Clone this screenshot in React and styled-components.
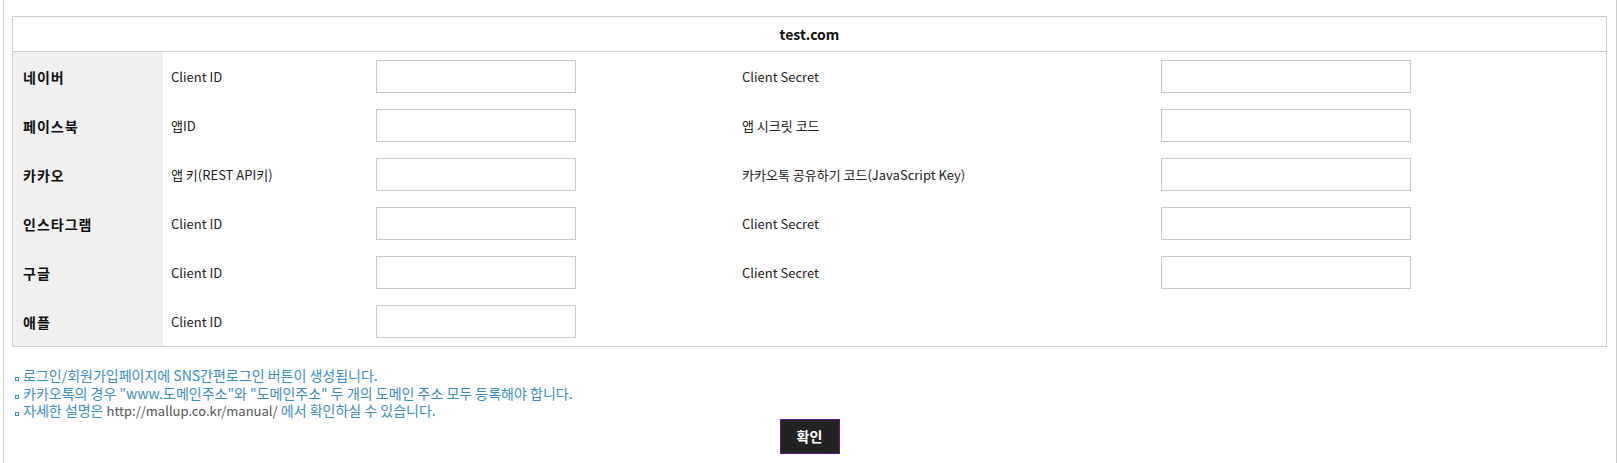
import React from 'react'
import styled, { createGlobalStyle } from 'styled-components'

const GlobalStyle = createGlobalStyle`
  html, body {
    margin: 0;
    padding: 0;
    background: #fff;
  }
  body {
    font-family: "Noto Sans CJK KR", "Noto Sans", sans-serif;
    font-size: 13px;
    color: #222;
  }
`

const providers = [
  { name: '네이버', label1: 'Client ID', label2: 'Client Secret' },
  { name: '페이스북', label1: '앱ID', label2: '앱 시크릿 코드' },
  { name: '카카오', label1: '앱 키(REST API키)', label2: '카카오톡 공유하기 코드(JavaScript Key)' },
  { name: '인스타그램', label1: 'Client ID', label2: 'Client Secret' },
  { name: '구글', label1: 'Client ID', label2: 'Client Secret' },
  { name: '애플', label1: 'Client ID' },
]

const App = () => {
  return (
    <>
      <GlobalStyle />
      <Page>
        <Table>
          <TableHead>test.com</TableHead>
          {providers.map((p) => (
            <Row key={p.name}>
              <RowHead>{p.name}</RowHead>
              <Cell>{p.label1}</Cell>
              <Cell><TextInput type="text" w={200} /></Cell>
              <Cell>{p.label2}</Cell>
              <Cell>{p.label2 && <TextInput type="text" w={250} />}</Cell>
            </Row>
          ))}
        </Table>

        <Notes>
          <Note>로그인/회원가입페이지에 SNS간편로그인 버튼이 생성됩니다.</Note>
          <Note>카카오톡의 경우 "www.도메인주소"와 "도메인주소" 두 개의 도메인 주소 모두 등록해야 합니다.</Note>
          <Note>자세한 설명은 <Url>http://mallup.co.kr/manual/</Url> 에서 확인하실 수 있습니다.</Note>
        </Notes>

        <ButtonBar>
          <SubmitButton type="button">확인</SubmitButton>
        </ButtonBar>
      </Page>
    </>
  )
}

const Page = styled.div`
  margin-left: 3px;
  min-height: 463px;
  box-sizing: border-box;
  border-left: 1px solid #ccc;
  border-right: 1px solid #ccc;
  padding: 16px 9px 0 8px;
`

const Table = styled.div`
  border: 1px solid #ccc;
`

const TableHead = styled.div`
  height: 34px;
  line-height: 34px;
  text-align: center;
  font-weight: 700;
  font-size: 14px;
  color: #111;
  border-bottom: 1px solid #ccc;
`

const Row = styled.div`
  display: grid;
  grid-template-columns: 150px 205px 366px 419px 1fr;
  height: 49px;
`

const RowHead = styled.div`
  display: flex;
  align-items: center;
  padding-left: 10px;
  background: #f0f0f0;
  font-weight: 700;
  font-size: 14px;
  letter-spacing: 1px;
  color: #111;
`

const Cell = styled.div`
  display: flex;
  align-items: center;
  padding: 0 8px;
  color: #222;
`

const TextInput = styled.input`
  box-sizing: border-box;
  width: ${(p) => p.w}px;
  height: 33px;
  border: 1px solid #c8c8c8;
  background: #fff;
  outline: none;
  margin: 0;
`

const Notes = styled.ul`
  list-style: none;
  margin: 20px 0 0;
  padding: 0 0 0 3px;
`

const Note = styled.li`
  position: relative;
  padding-left: 8px;
  line-height: 17.5px;
  font-size: 14px;
  color: #3a8ec4;

  &::before {
    content: '';
    position: absolute;
    left: 0;
    top: 10px;
    width: 2px;
    height: 2px;
    border: 1px solid #3a8ec4;
  }
`

const Url = styled.span`
  font-size: 13px;
  color: #555;
`

const ButtonBar = styled.div`
  display: flex;
  justify-content: center;
  margin-top: -1px;
`

const SubmitButton = styled.button`
  width: 60px;
  height: 35px;
  background: #222;
  border: 1px solid #5b1a8c;
  color: #fff;
  font-family: inherit;
  font-weight: 700;
  font-size: 14px;
  cursor: pointer;
  padding: 0;
`

export default App
